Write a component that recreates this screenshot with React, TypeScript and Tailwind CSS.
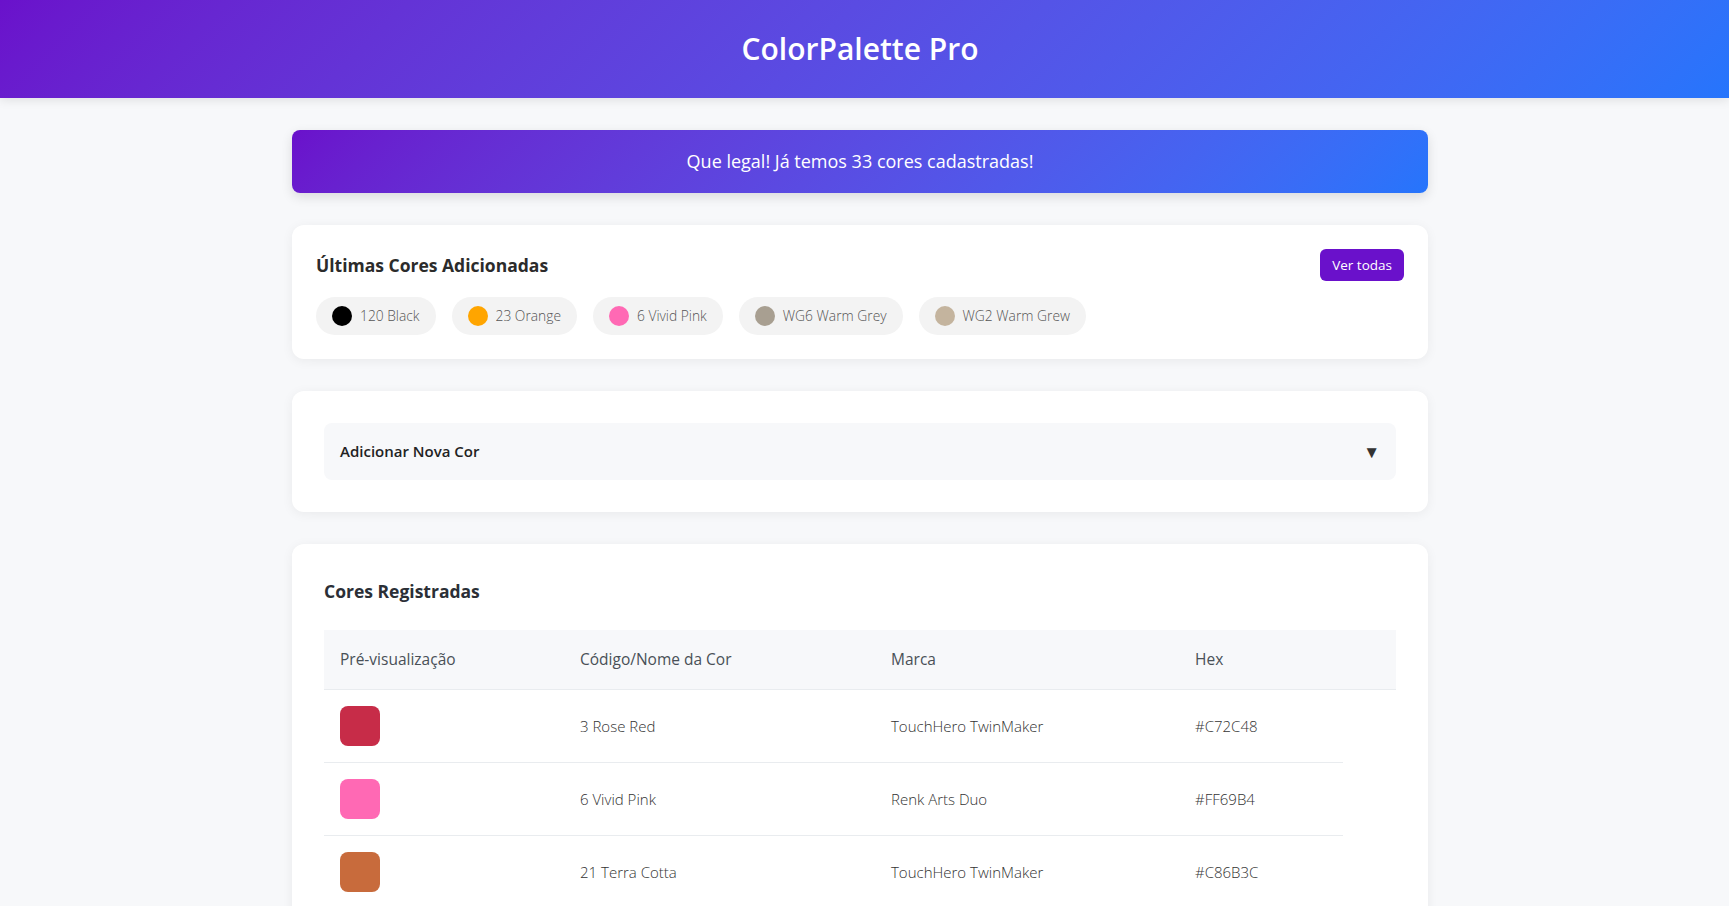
const recent = [
  { name: '120 Black', hex: '#000000' },
  { name: '23 Orange', hex: '#FFA500' },
  { name: '6 Vivid Pink', hex: '#FF69B4' },
  { name: 'WG6 Warm Grey', hex: '#A89F91' },
  { name: 'WG2 Warm Grew', hex: '#C4B49E' },
];

const colors = [
  { name: '3 Rose Red', brand: 'TouchHero TwinMaker', hex: '#C72C48' },
  { name: '6 Vivid Pink', brand: 'Renk Arts Duo', hex: '#FF69B4' },
  { name: '21 Terra Cotta', brand: 'TouchHero TwinMaker', hex: '#C86B3C' },
  { name: '23 Orange', brand: 'TouchHero TwinMaker', hex: '#FFA500' },
  { name: '120 Black', brand: 'Renk Arts Duo', hex: '#000000' },
  { name: 'WG6 Warm Grey', brand: 'TouchHero TwinMaker', hex: '#A89F91' },
];

function Card({ className, children }: { className: string; children: React.ReactNode }) {
  return (
    <section className={`bg-white rounded-xl shadow-[0_2px_12px_rgba(0,0,0,0.06)] ${className}`}>
      {children}
    </section>
  );
}

export default function App() {
  return (
    <div className="min-h-screen bg-[#f7f8fa] font-['Open_Sans',sans-serif] text-[#333]">
      <header className="bg-linear-135 from-[#6a11cb] to-[#2575fc] pr-[9px] py-8 text-center shadow-[0_2px_10px_rgba(0,0,0,0.1)]">
        <h1 className="text-[30px] leading-[34px] font-semibold text-white">ColorPalette Pro</h1>
      </header>

      <div className="pr-[9px]">
        <main className="max-w-[1136px] mx-auto py-8 flex flex-col gap-8">
          <div className="bg-linear-135 from-[#6a11cb] to-[#2575fc] rounded-lg py-5 text-center text-white text-[18px] leading-[23px] font-normal shadow-[0_4px_12px_rgba(0,0,0,0.12)]">
            Que legal! Já temos 33 cores cadastradas!
          </div>

          <Card className="p-6">
            <div className="flex items-center justify-between">
              <h2 className="text-[17.5px] font-bold text-[#2b2b2b]">Últimas Cores Adicionadas</h2>
              <button className="h-8 px-3 rounded-md bg-[#6a11cb] text-white text-[13.5px]">Ver todas</button>
            </div>
            <div className="mt-4 flex gap-4">
              {recent.map((c) => (
                <div key={c.name} className="flex items-center gap-2 rounded-full bg-[#f3f3f3] px-4 py-[9px]">
                  <span className="w-5 h-5 shrink-0 rounded-full" style={{ backgroundColor: c.hex }} />
                  <span className="text-[13.8px] leading-5 font-light text-[#555]">{c.name}</span>
                </div>
              ))}
            </div>
          </Card>

          <Card className="p-8">
            <div className="h-[57px] rounded-lg bg-[#f7f8fa] px-4 flex items-center justify-between">
              <span className="text-[15px] font-semibold text-[#222]">Adicionar Nova Cor</span>
              <span className="text-[17px] leading-none text-[#333]">▼</span>
            </div>
          </Card>

          <Card className="p-8">
            <h2 className="text-[17.5px] leading-[30px] font-bold text-[#2b2f36] mb-6">Cores Registradas</h2>
            <table className="w-full table-fixed border-collapse text-left">
              <thead>
                <tr className="bg-[#f7f8fa]">
                  <th className="w-[240px] px-4 py-4 font-normal text-[15.5px] leading-[27px] text-[#495057] border-b border-[#e9ecef]">Pré-visualização</th>
                  <th className="w-[311px] px-4 py-4 font-normal text-[15.5px] leading-[27px] text-[#495057] border-b border-[#e9ecef]">Código/Nome da Cor</th>
                  <th className="w-[304px] px-4 py-4 font-normal text-[15.5px] leading-[27px] text-[#495057] border-b border-[#e9ecef]">Marca</th>
                  <th className="w-[164px] px-4 py-4 font-normal text-[15.5px] leading-[27px] text-[#495057] border-b border-[#e9ecef]">Hex</th>
                  <th className="w-[53px] border-b border-[#e9ecef]"></th>
                </tr>
              </thead>
              <tbody>
                {colors.map((c) => (
                  <tr key={c.name + c.brand}>
                    <td className="px-4 py-4 border-b border-[#e9ecef]">
                      <div className="w-10 h-10 rounded-lg" style={{ backgroundColor: c.hex }} />
                    </td>
                    <td className="px-4 py-4 border-b border-[#e9ecef] text-[15px] font-light text-[#333]">{c.name}</td>
                    <td className="px-4 py-4 border-b border-[#e9ecef] text-[15px] font-light text-[#333]">{c.brand}</td>
                    <td className="px-4 py-4 border-b border-[#e9ecef] text-[15px] font-light text-[#333]">{c.hex}</td>
                  </tr>
                ))}
              </tbody>
            </table>
          </Card>
        </main>
      </div>
    </div>
  );
}
